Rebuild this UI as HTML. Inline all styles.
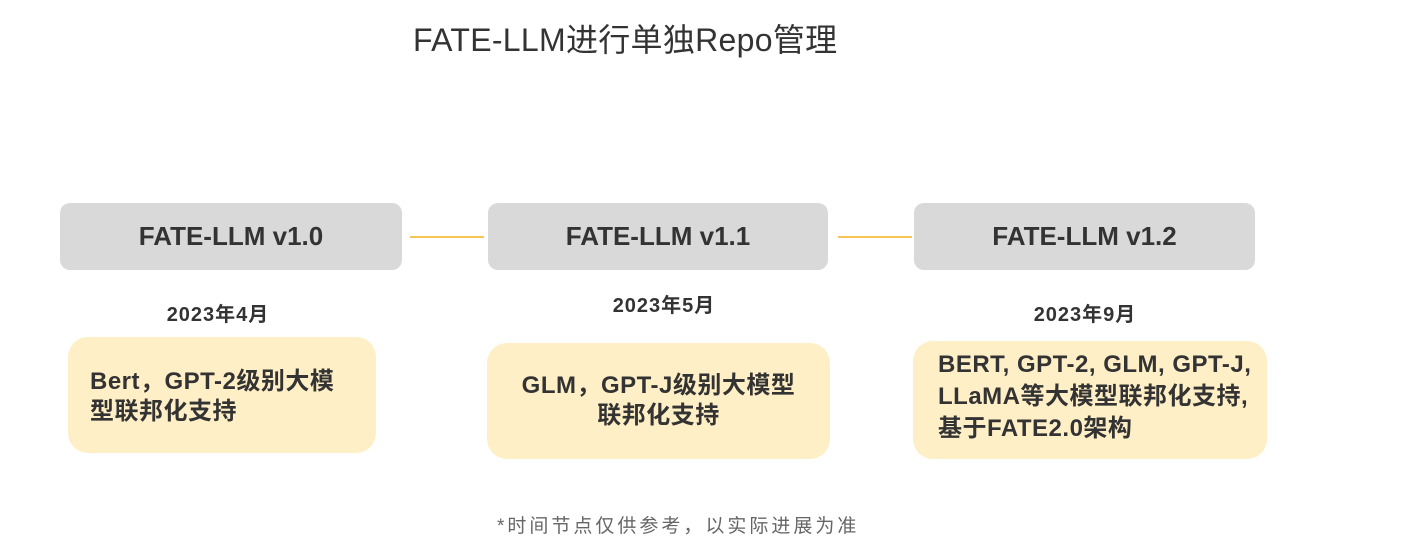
<!DOCTYPE html>
<html><head><meta charset="utf-8"><style>
body{margin:0;width:1412px;height:554px;background:#fff;position:relative;overflow:hidden;font-family:"Liberation Sans","Noto Sans CJK SC",sans-serif;color:#333}
.a{position:absolute}
.g{background:#d9d9d9;border-radius:10px;height:67px;top:203px;display:flex;align-items:center;justify-content:center;font-weight:bold;font-size:26px;color:#333}
.l{height:2px;background:#f6c553;top:236px}
.d{font-weight:bold;font-size:20px;letter-spacing:1px;width:200px;text-align:center}
.y{background:#ffefc6;border-radius:20px;font-weight:bold;font-size:24px;letter-spacing:0.5px;line-height:30px;box-sizing:border-box;white-space:nowrap}
</style></head><body>
<div class="a" style="left:413px;top:15px;font-size:32px;letter-spacing:0.3px">FATE-LLM进行单独Repo管理</div>
<div class="a g" style="left:60px;width:342px">FATE-LLM v1.0</div>
<div class="a g" style="left:488px;width:340px">FATE-LLM v1.1</div>
<div class="a g" style="left:914px;width:341px">FATE-LLM v1.2</div>
<div class="a l" style="left:410px;width:74px"></div>
<div class="a l" style="left:838px;width:74px"></div>
<div class="a d" style="left:118px;top:298px">2023年4月</div>
<div class="a d" style="left:564px;top:289px">2023年5月</div>
<div class="a d" style="left:985px;top:298px">2023年9月</div>
<div class="a y" style="left:68px;top:337px;width:308px;height:116px;padding:30px 0 0 22px">Bert，GPT-2级别大模<br>型联邦化支持</div>
<div class="a y" style="left:487px;top:343px;width:343px;height:116px;padding:28px 0 0 0;text-align:center">GLM，GPT-J级别大模型<br>联邦化支持</div>
<div class="a y" style="left:913px;top:341px;width:354px;height:118px;padding:8px 0 0 25px;line-height:32px">BERT, GPT-2, GLM, GPT-J,<br>LLaMA等大模型联邦化支持,<br>基于FATE2.0架构</div>
<div class="a" style="left:497px;top:511px;font-size:19px;letter-spacing:3px;color:#666">*时间节点仅供参考，以实际进展为准</div>
</body></html>
